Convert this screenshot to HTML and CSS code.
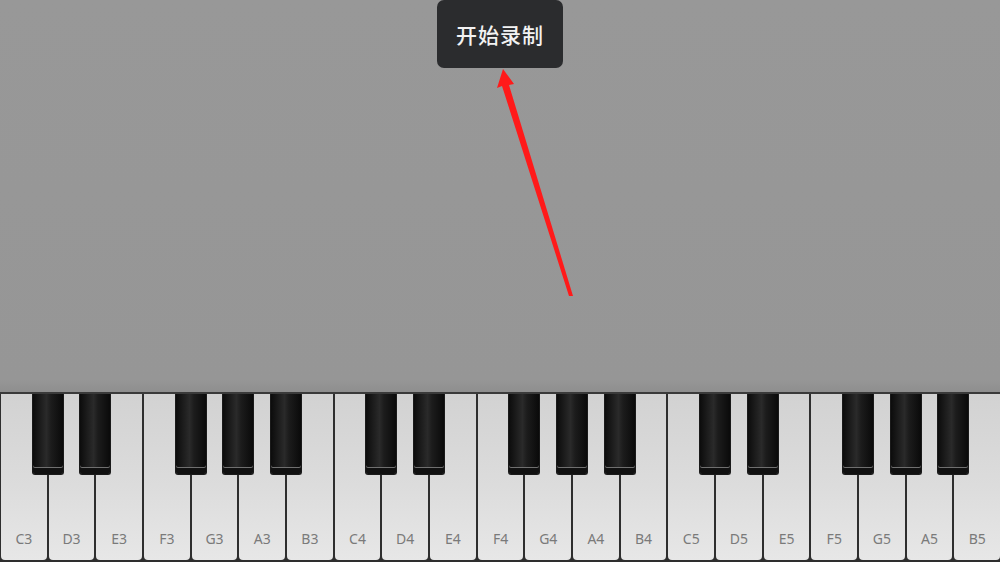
FILE: index.html
```html
<!DOCTYPE html>
<html lang="zh">
<head>
    <meta charset="UTF-8">
    <meta name="viewport" content="width=device-width, initial-scale=1.0">
    <title>钢琴</title>
    <link rel="stylesheet" href="styles.css">
</head>
<body>
    <div class="stage">
        <div class="tip">开始录制</div>
        <svg class="arrow" width="1000" height="393" viewBox="0 0 1000 393">
            <polygon points="503,69 514,84 509,85 573,296 569,296 502,86 497,88" fill="#ff1a1a"/>
        </svg>
    </div>

    <div class="keyboard">
        <div class="white"><span class="black"></span><span class="label">C3</span></div>
        <div class="white"><span class="black"></span><span class="label">D3</span></div>
        <div class="white"><span class="label">E3</span></div>
        <div class="white"><span class="black"></span><span class="label">F3</span></div>
        <div class="white"><span class="black"></span><span class="label">G3</span></div>
        <div class="white"><span class="black"></span><span class="label">A3</span></div>
        <div class="white"><span class="label">B3</span></div>
        <div class="white"><span class="black"></span><span class="label">C4</span></div>
        <div class="white"><span class="black"></span><span class="label">D4</span></div>
        <div class="white"><span class="label">E4</span></div>
        <div class="white"><span class="black"></span><span class="label">F4</span></div>
        <div class="white"><span class="black"></span><span class="label">G4</span></div>
        <div class="white"><span class="black"></span><span class="label">A4</span></div>
        <div class="white"><span class="label">B4</span></div>
        <div class="white"><span class="black"></span><span class="label">C5</span></div>
        <div class="white"><span class="black"></span><span class="label">D5</span></div>
        <div class="white"><span class="label">E5</span></div>
        <div class="white"><span class="black"></span><span class="label">F5</span></div>
        <div class="white"><span class="black"></span><span class="label">G5</span></div>
        <div class="white"><span class="black"></span><span class="label">A5</span></div>
        <div class="white"><span class="label">B5</span></div>
    </div>
</body>
</html>
```

FILE: styles.css
```css
html, body {
    margin: 0;
    padding: 0;
    width: 1000px;
    height: 562px;
    overflow: hidden;
    background-color: #979797;
    font-family: "Noto Sans", "Noto Sans CJK SC", sans-serif;
}
.stage {
    position: relative;
    height: 392px;
    background: linear-gradient(to bottom, #989898 0%, #969696 97%, #8e8e8e 100%);
}
.tip {
    position: absolute;
    left: 437px;
    top: 0;
    width: 126px;
    height: 68px;
    border-radius: 7px;
    background-color: #2b2c2e;
    color: #f2f2f2;
    font-size: 21px;
    font-weight: 500;
    line-height: 68px;
    text-align: center;
    letter-spacing: 1px;
    font-family: "Noto Sans CJK SC", sans-serif;
}
.arrow {
    position: absolute;
    left: 0;
    top: 0;
}
.keyboard {
    display: flex;
    height: 170px;
    background-color: #2e2e2e;
    border-top: 2px solid #3a3a3a;
    box-sizing: border-box;
    padding-left: 1px;
}
.white {
    position: relative;
    flex: 1;
    margin-right: 2px;
    margin-bottom: 2px;
    border-radius: 0 0 4px 4px;
    background: linear-gradient(to bottom, #d2d2d2 0%, #dcdcdc 55%, #e7e7e7 100%);
    display: flex;
    align-items: flex-end;
    justify-content: center;
}
.white:last-child {
    margin-right: 0;
}
.label {
    color: #7a7a7a;
    font-size: 14px;
    padding-bottom: 12px;
}
.black {
    position: absolute;
    top: 0;
    right: -17px;
    width: 32px;
    height: 81px;
    z-index: 2;
    box-sizing: border-box;
    border-radius: 0 0 3px 3px;
    border: 1px solid #1a1a1a;
    border-top: none;
    background: linear-gradient(to right, #0c0c0c 0%, #2a2a2a 45%, #1c1c1c 60%, #0a0a0a 100%);
    box-shadow: inset 0 -6px 0 #111, inset 0 -7px 0 #707070;
}
```
